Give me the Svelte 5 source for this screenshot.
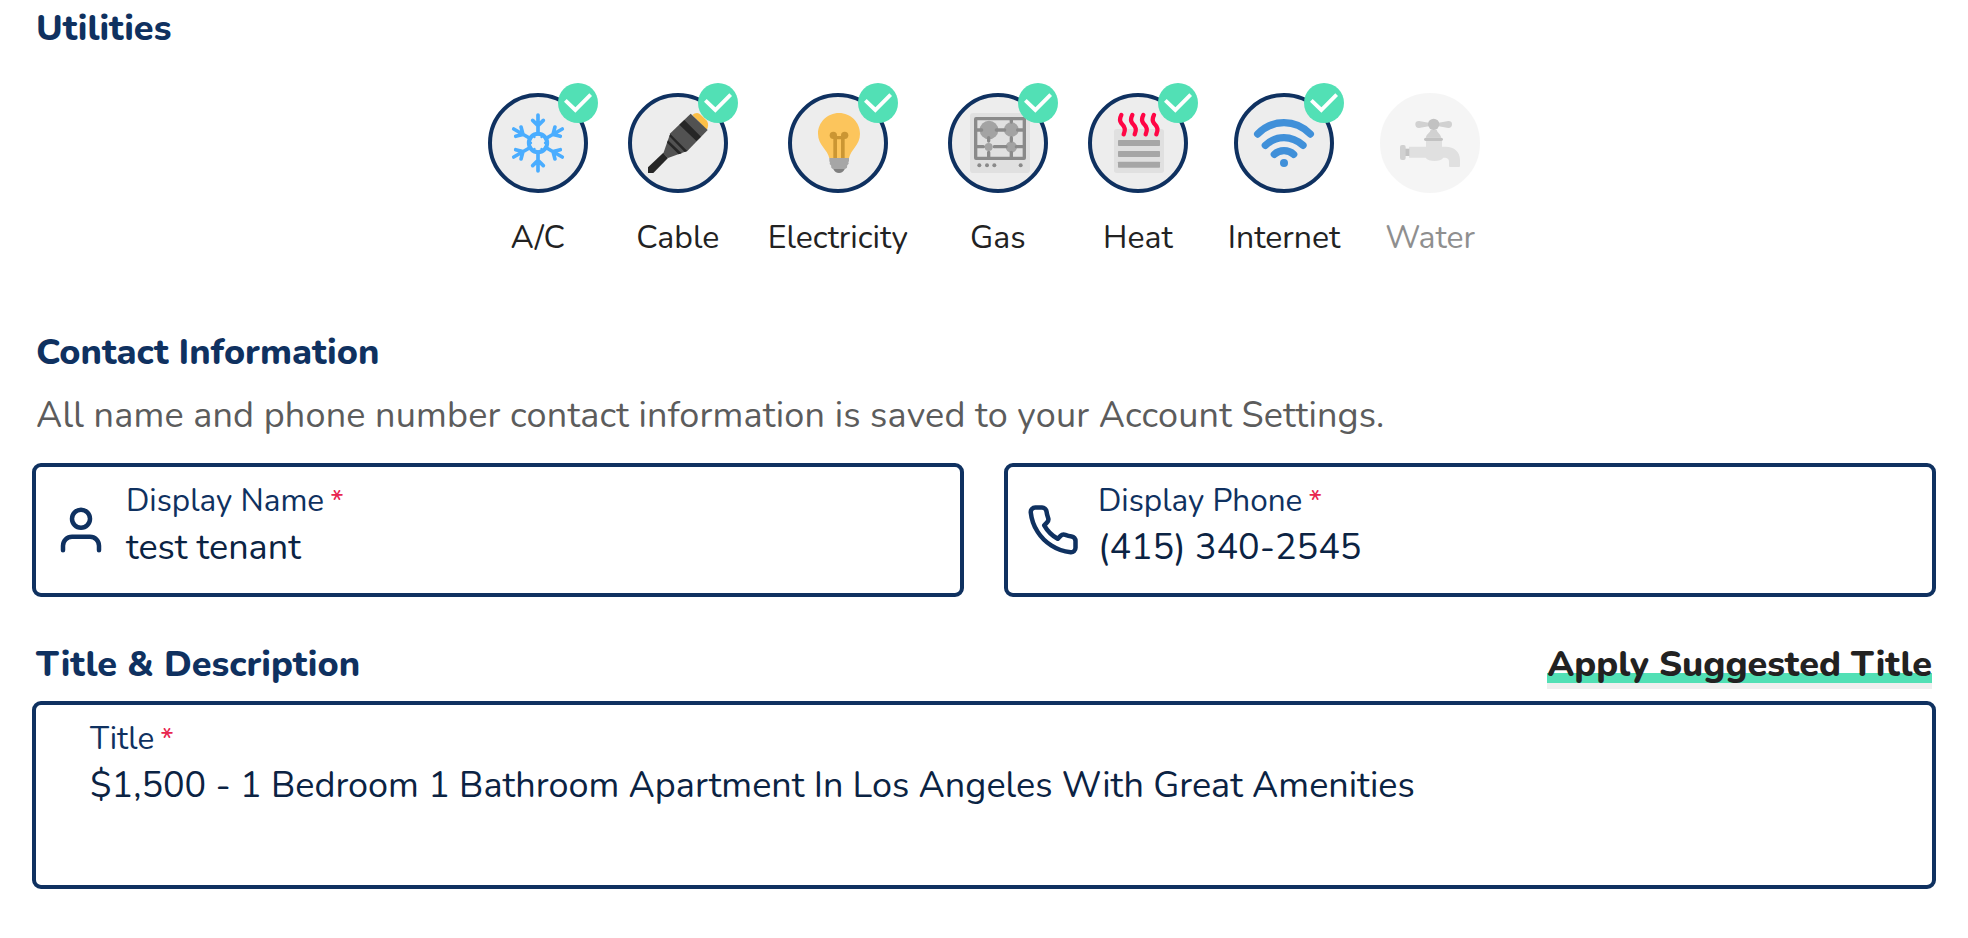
<script>
  const utilities = [
    { id: 'ac', label: 'A/C', selected: true },
    { id: 'cable', label: 'Cable', selected: true },
    { id: 'electricity', label: 'Electricity', selected: true },
    { id: 'gas', label: 'Gas', selected: true },
    { id: 'heat', label: 'Heat', selected: true },
    { id: 'internet', label: 'Internet', selected: true },
    { id: 'water', label: 'Water', selected: false }
  ];
  const arms = [0, 60, 120, 180, 240, 300];
</script>

<main>
  <h2>Utilities</h2>

  <div class="utilities">
    {#each utilities as u (u.id)}
      <div class="utility" class:off={!u.selected}>
        <div class="disc">
          <svg class="pic" viewBox="0 0 180 180">
            {#if u.id === 'ac'}
              <g fill="none" stroke="#4aadff" stroke-width="12" stroke-linecap="round">
                <circle cx="90" cy="90" r="27.5" />
                {#each arms as a}
                  <g transform="rotate({a} 90 90)">
                    <path d="M90 63V6M74 22l16 16 16-16" stroke-width="11" />
                    <path d="M90 67v2" stroke-width="7" transform="rotate(30 90 90)" />
                  </g>
                {/each}
              </g>
            {:else if u.id === 'cable'}
              <path d="M133 6Q139 0 147 0Q153 0 158 5L175 22Q183 31 179 44L176 50Z" fill="#fcbf47" />
              <path d="M46 119L60 135L16 180H0V163Z" fill="#262626" />
              <path d="M128 2L179 51L118 114L60 135Q51 130 46 121L67 61Z" fill="#525252" />
              <path d="M109 21L94 35L145 84L159 71ZM67 63L64 70L110 117L118 114ZM60 82L57 89L92 124L101 121Z" fill="#262626" />
            {:else if u.id === 'electricity'}
              <path d="M93 0C128 0 156 28 156 62C156 98 128 108 123 136H64C59 108 30 98 30 62C30 28 58 0 93 0Z" fill="#fcc55c" />
              <g fill="#cb9633">
                <circle cx="76" cy="67" r="11" />
                <circle cx="110" cy="67" r="11" />
                <path d="M76 69H110V79H110V135H99V79H87V135H76Z" />
              </g>
              <path d="M64 135H123V144Q120 148 122 152Q116 155 117 164Q112 168 109 169H77Q73 167 70 164Q71 156 65 153Q67 148 64 144Z" fill="#a6a6a6" />
              <path d="M76 168H110Q105 180 93 180Q81 180 76 168Z" fill="#808080" />
            {:else if u.id === 'gas'}
              <g transform="translate(6 0)">
                <rect width="180" height="180" rx="10" fill="#e0e0e0" />
                <g fill="#a3a3a3">
                  <circle cx="57" cy="51" r="28" />
                  <circle cx="124" cy="50" r="22" />
                  <circle cx="56" cy="102" r="12" />
                  <circle cx="124" cy="102" r="17" />
                </g>
                <g fill="none" stroke="#8a8a8a" stroke-width="10">
                  <rect x="17" y="17" width="146" height="119" rx="1" />
                  <path stroke-linecap="round" d="M17 51H35M79 51H104M143 51H163M17 101H40M73 101H108M139 101H163M56 74V84M56 118V136M124 17V27M124 74V84M124 118V136" />
                </g>
                <g fill="#8a8a8a">
                  <circle cx="28" cy="157" r="6" />
                  <circle cx="51" cy="157" r="6" />
                  <circle cx="73" cy="157" r="6" />
                  <circle cx="152" cy="157" r="6" />
                </g>
              </g>
            {:else if u.id === 'heat'}
              <rect x="18" y="48" width="150" height="132" rx="8" fill="#e0e0e0" />
              <g fill="#a6a6a6">
                <rect x="30" y="81" width="126" height="18" rx="2" />
                <rect x="30" y="114" width="126" height="18" rx="2" />
                <rect x="30" y="146" width="126" height="18" rx="2" />
              </g>
              <g fill="none" stroke="#ff0545" stroke-width="13" stroke-linecap="round">
                {#each [0, 33, 66, 98] as x}
                  <path d="M{40 + x} 6C{34 + x} 18 {35 + x} 25 {40 + x} 31C{52 + x} 43 {53 + x} 50 {47 + x} 64" />
                {/each}
              </g>
            {:else if u.id === 'internet'}
              <g fill="none" stroke="#4090d9" stroke-width="22" stroke-linecap="round">
                <path d="M11 63Q45 29 90 29T169 63" />
                <path d="M34 97Q59 74 90 74T147 97" />
                <path d="M61 124Q73 113 90 113T119 124" />
              </g>
              <circle cx="90" cy="150" r="12" fill="#4090d9" />
            {:else}
              <path d="M78 84H126V101H137C163 101 180 117 180 140V159Q180 162 177 162H150Q147 162 147 159V146Q147 135 136 134H130C122 147 85 147 77 134H27V101H78Z" fill="#c2c2c2" />
              <path d="M92 50H110C112 60 123 63 123 74H78C78 63 90 60 92 50ZM57 24Q46 24 46 34Q46 45 57 45L90 39H112L145 45Q156 45 156 34Q156 24 145 24L112 30H90Z" fill="#a4a4a4" />
              <circle cx="101" cy="34" r="17" fill="#868686" />
              <rect x="72" y="74" width="57" height="10" rx="5" fill="#868686" />
              <rect x="12" y="107" width="16" height="22" fill="#868686" />
              <rect x="0" y="96" width="17" height="45" rx="6" fill="#a4a4a4" />
            {/if}
          </svg>
          {#if u.selected}
            <svg class="badge" viewBox="0 0 120 120">
              <circle cx="60" cy="60" r="60" fill="#52e0b5" />
              <path d="M22 52L52 81L98 35" fill="none" stroke="#fff" stroke-width="11.5" />
            </svg>
          {/if}
        </div>
        <span>{u.label}</span>
      </div>
    {/each}
  </div>

  <h2 class="contact">Contact Information</h2>
  <p>All name and phone number contact information is saved to your Account Settings.</p>

  <div class="fields">
    <div class="field">
      <svg class="icon" viewBox="0 0 24 24">
        <path d="M20 21v-2a4 4 0 0 0-4-4H8a4 4 0 0 0-4 4v2" />
        <circle cx="12" cy="7" r="4" />
      </svg>
      <div class="text">
        <div class="label">Display Name <i>*</i></div>
        <div class="value">test tenant</div>
      </div>
    </div>
    <div class="field">
      <svg class="icon" viewBox="0 0 24 24">
        <path d="M22 16.92v3a2 2 0 0 1-2.18 2 19.79 19.79 0 0 1-8.63-3.07 19.5 19.5 0 0 1-6-6 19.79 19.79 0 0 1-3.07-8.67A2 2 0 0 1 4.11 2h3a2 2 0 0 1 2 1.72 12.84 12.84 0 0 0 .7 2.81 2 2 0 0 1-.45 2.11L8.09 9.91a16 16 0 0 0 6 6l1.27-1.27a2 2 0 0 1 2.11-.45 12.84 12.84 0 0 0 2.81.7A2 2 0 0 1 22 16.92z" />
      </svg>
      <div class="text">
        <div class="label">Display Phone <i>*</i></div>
        <div class="value">(415) 340-2545</div>
      </div>
    </div>
  </div>

  <div class="titlebar">
    <h2>Title &amp; Description</h2>
    <button>Apply Suggested Title</button>
  </div>

  <div class="field title">
    <div class="text">
      <div class="label">Title <i>*</i></div>
      <div class="value">$1,500 - 1 Bedroom 1 Bathroom Apartment In Los Angeles With Great Amenities</div>
    </div>
  </div>
</main>

<style>
  :global(body) {
    margin: 0;
    background: #fff;
  }
  main {
    box-sizing: border-box;
    height: 938px;
    padding: 5px 32px 0;
    overflow: hidden;
    font-family: Nunito, Lato, sans-serif;
    font-size: 36px;
    line-height: 48px;
    color: #222;
  }
  h2 {
    margin: 0;
    padding-left: 4px;
    font-size: 36px;
    font-weight: 800;
    color: #0f3160;
  }
  .utilities {
    display: flex;
    justify-content: center;
    gap: 40px;
    margin-top: 40px;
  }
  .utility {
    display: flex;
    flex-direction: column;
    align-items: center;
    min-width: 100px;
    gap: 23px;
    font-size: 32px;
    line-height: 44px;
  }
  .off {
    opacity: 0.5;
  }
  .disc {
    position: relative;
    box-sizing: border-box;
    display: grid;
    place-items: center;
    width: 100px;
    height: 100px;
    border: 4px solid #0f3160;
    border-radius: 50%;
    background: #ededed;
  }
  .off .disc {
    border-color: #ededed;
  }
  .pic {
    width: 60px;
    height: 60px;
    overflow: visible;
  }
  .badge {
    position: absolute;
    top: -14px;
    right: -14px;
    width: 40px;
    height: 40px;
  }
  .contact {
    margin-top: 69px;
  }
  p {
    margin: 15px 0 23px;
    padding-left: 4px;
    letter-spacing: 0.175px;
    color: #5c5c5c;
  }
  .fields {
    display: grid;
    grid-template-columns: 1fr 1fr;
    gap: 40px;
  }
  .field {
    box-sizing: border-box;
    display: flex;
    height: 134px;
    padding: 0 18px;
    border: 4px solid #0f3160;
    border-radius: 9px;
  }
  .icon {
    align-self: center;
    flex: none;
    width: 54px;
    height: 54px;
    fill: none;
    stroke: #0f3160;
    stroke-width: 2;
    stroke-linecap: round;
    stroke-linejoin: round;
  }
  .text {
    padding: 12px 0 0 18px;
  }
  .label {
    height: 44px;
    font-size: 31.5px;
    line-height: 44px;
    color: #0f3160;
  }
  .label i {
    margin-left: -2px;
    font-style: normal;
    font-size: 30px;
    color: #e8264f;
  }
  .value {
    padding-top: 1px;
    color: #0b2343;
  }
  .titlebar {
    display: flex;
    justify-content: space-between;
    margin: 43px 4px 12px 0;
    line-height: 49px;
  }
  button {
    height: 49px;
    padding: 0;
    border: 0;
    font: inherit;
    font-weight: 800;
    color: #222;
    background: linear-gradient(#fff 33px, #52e0b5 33px, #52e0b5 43px, #efefef 43px);
  }
  .title {
    height: 188px;
    padding-left: 36px;
  }
</style>
